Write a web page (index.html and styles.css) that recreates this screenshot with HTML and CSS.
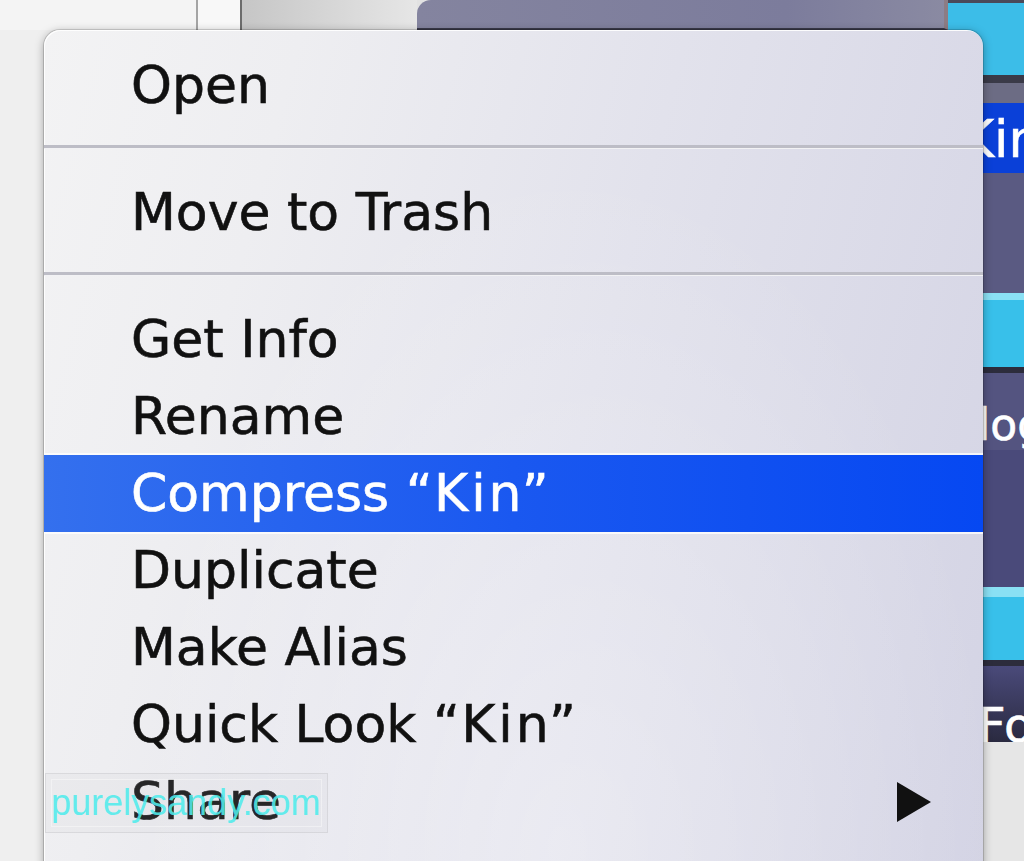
FILE: index.html
```html
<!DOCTYPE html>
<html lang="en">
<head>
    <meta charset="UTF-8">
    <meta name="viewport" content="width=device-width, initial-scale=1.0">
    <title>Finder Context Menu</title>
    <link rel="stylesheet" href="styles.css">
</head>
<body>
    <div class="desktop">
        <!-- Finder window behind the menu -->
        <div class="backdrop">
            <div class="topbar">
                <div class="sidebar-top"></div>
                <div class="pane-top"></div>
                <div class="tab"></div>
                <div class="window-top"></div>
            </div>
            <div class="sidebar"></div>
        </div>

        <!-- File list peeking out on the right -->
        <div class="files">
            <div class="band edge"></div>
            <div class="band cyan first"></div>
            <div class="band dark thin"></div>
            <div class="band slate"></div>
            <div class="band selected">Kin</div>
            <div class="band purple tall"></div>
            <div class="band glow"></div>
            <div class="band cyan"></div>
            <div class="band dark"></div>
            <div class="band purple label-log">log</div>
            <div class="band purple deep"></div>
            <div class="band glow wide"></div>
            <div class="band cyan short"></div>
            <div class="band dark"></div>
            <div class="band label-fo">Fo</div>
            <div class="band blank"></div>
        </div>

        <!-- Context menu -->
        <div class="menu">
            <div class="menu-item">Open</div>
            <div class="menu-separator"></div>
            <div class="menu-item">Move to Trash</div>
            <div class="menu-separator"></div>
            <div class="menu-item">Get Info</div>
            <div class="menu-item">Rename</div>
            <div class="menu-item active">Compress <span class="name">“Kin”</span></div>
            <div class="menu-item">Duplicate</div>
            <div class="menu-item">Make Alias</div>
            <div class="menu-item">Quick Look <span class="name">“Kin”</span></div>
            <div class="menu-item submenu">
                Share
                <svg class="arrow" width="36" height="42" viewBox="0 0 36 42">
                    <path d="M1 1 L35 21 L1 41 Z" fill="#111"/>
                </svg>
            </div>
        </div>

        <div class="watermark">purelysandy.com</div>
    </div>
</body>
</html>
```

FILE: styles.css
```css
/* General Styling */
body {
    margin: 0;
    padding: 0;
    overflow: hidden;
    background: #efefef;
    font-family: "DejaVu Sans", "Liberation Sans", sans-serif;
}

.desktop {
    position: relative;
    display: flex;
    width: 1024px;
    height: 861px;
    overflow: hidden;
}

/* Finder window */
.backdrop {
    flex: 1;
    display: flex;
    flex-direction: column;
}

.topbar {
    height: 30px;
    display: flex;
    background: #e2e2e2;
}

.sidebar-top {
    width: 196px;
    background: #f4f4f4;
    border-right: 2px solid #a4a4a4;
}

.pane-top {
    width: 42px;
    background: #f8f8f8;
    border-right: 2px solid #6c6c6c;
}

.tab {
    width: 175px;
    background: linear-gradient(to right, #c6c6c6, #e6e6e6);
}

.window-top {
    flex: 1;
    background: linear-gradient(to right, #84849f, #7c7c9c 70%, #8a8aa2);
    border-top-left-radius: 14px;
    border-right: 4px solid #8c7c84;
    border-bottom: 2px solid #3a3a4a;
}

.sidebar {
    flex: 1;
    background: #efefef;
}

/* File list strip */
.files {
    width: 76px;
    display: flex;
    flex-direction: column;
}

.band {
    overflow: hidden;
    color: white;
    white-space: nowrap;
    -webkit-text-stroke: 0.6px white;
}

.edge { height: 3px; background: #4a4a5a; }
.cyan { height: 67px; background: #38c0ea; }
.cyan.first { height: 72px; background: #3cbde8; }
.cyan.short { height: 63px; }
.dark { height: 6px; background: #2c2c3c; }
.dark.thin { height: 8px; background: #3a3a48; }
.slate { height: 20px; background: #6c6c84; }
.glow { height: 7px; background: #8ae0f4; }
.glow.wide { height: 10px; }
.purple { height: 77px; background: #545480; }
.purple.tall { height: 120px; background: #5a5a82; }
.purple.deep { height: 137px; background: #4a4a7a; }
.blank { flex: 1; background: #e6e6e6; }

.selected {
    height: 70px;
    box-sizing: border-box;
    padding: 10px 0 0 12px;
    background: #0a40d8;
    font-size: 52px;
    line-height: 52px;
}

.label-log {
    box-sizing: border-box;
    padding: 30px 0 0 30px;
    font-size: 44px;
    line-height: 44px;
}

.label-fo {
    height: 76px;
    box-sizing: border-box;
    padding: 35px 0 0 30px;
    background: linear-gradient(to bottom, #4a4a7a, #2a2a40);
    font-size: 48px;
    line-height: 48px;
}

/* Context menu */
.menu {
    position: absolute;
    left: 44px;
    top: 30px;
    width: 939px;
    height: 860px;
    box-sizing: border-box;
    padding-top: 17px;
    border-radius: 16px 16px 0 0;
    background:
        radial-gradient(ellipse at 55% 95%, rgba(255, 255, 255, 0.35), rgba(255, 255, 255, 0) 60%),
        linear-gradient(105deg, #f3f3f4 0%, #eeeef1 22%, #e2e2ec 55%, #d3d3e4 100%);
    box-shadow: inset 1px 1px 0 rgba(255, 255, 255, 0.9),
        0 0 0 1px rgba(0, 0, 0, 0.14),
        0 2px 10px rgba(0, 0, 0, 0.35);
}

.menu-item {
    height: 77px;
    padding-left: 87px;
    padding-right: 51px;
    font-size: 52px;
    line-height: 77px;
    color: #111;
    white-space: nowrap;
    -webkit-text-stroke: 0.6px #111;
}

.menu-item .name {
    letter-spacing: 3px;
}

.menu-item.active {
    color: white;
    -webkit-text-stroke: 0.6px white;
    background: linear-gradient(to right, #3470ee, #1a58f0 50%, #0648f2);
    box-shadow: 0 -2px 0 rgba(255, 255, 255, 0.75), 0 2px 0 rgba(255, 255, 255, 0.75);
}

.menu-item.submenu {
    display: flex;
    justify-content: space-between;
    align-items: center;
}

.menu-separator {
    height: 50px;
    box-sizing: border-box;
    padding-top: 21px;
}

.menu-separator::before {
    content: "";
    display: block;
    height: 3px;
    background: #bdbdc6;
    border-bottom: 1px solid rgba(255, 255, 255, 0.8);
}

/* Watermark */
.watermark {
    position: absolute;
    left: 45px;
    top: 773px;
    width: 283px;
    height: 60px;
    box-sizing: border-box;
    padding: 11px 0 0 5px;
    background: rgba(200, 200, 206, 0.12);
    border: 1px solid rgba(200, 200, 204, 0.5);
    outline: 1px solid rgba(255, 255, 255, 0.4);
    outline-offset: -7px;
    font-family: "Liberation Sans", Arial, sans-serif;
    font-size: 36px;
    line-height: 36px;
    color: rgba(80, 236, 236, 0.9);
}
```
